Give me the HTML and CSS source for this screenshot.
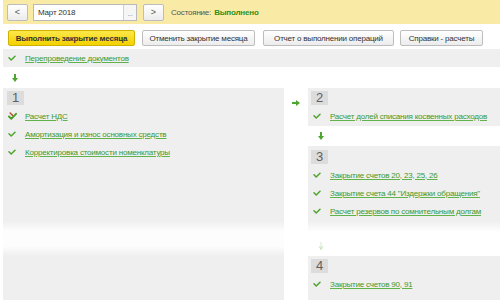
FILE: index.html
```html
<!DOCTYPE html>
<html lang="ru">
<head>
<meta charset="utf-8">
<title>Закрытие месяца</title>
<link rel="stylesheet" href="styles.css">
</head>
<body>
<div class="page">
  <div class="topbar">
    <button class="btn nav">&lt;</button>
    <div class="date"><span class="date-text">Март 2018</span><span class="date-pick">...</span></div>
    <button class="btn nav">&gt;</button>
    <span class="state-label">Состояние:</span>
    <span class="state">Выполнено</span>
  </div>

  <div class="actions">
    <button class="btn primary w-run">Выполнить закрытие месяца</button>
    <button class="btn w-cancel">Отменить закрытие месяца</button>
    <button class="btn w-report">Отчет о выполнении операций</button>
    <button class="btn w-ref">Справки - расчеты</button>
  </div>

  <div class="band">
    <div class="item"><svg class="chk" viewBox="0 0 8 6"><path d="M1 2.8 L3.2 5 L7 1.2"/></svg><a class="link">Перепроведение документов</a></div>
  </div>

  <div class="arrow-row">
    <svg class="arr-down" viewBox="0 0 6 8"><path d="M2 0 H4 V4 H6 L3 8 L0 4 H2 Z"/></svg>
  </div>

  <div class="stages">
    <div class="panel left">
      <div class="num">1</div>
      <div class="item"><svg class="chk warn" viewBox="0 0 9 8"><path class="g" d="M1 4.5 L3.3 6.8 L8 1.8"/><path class="r" d="M2.2 1 L4.6 3.4"/></svg><a class="link">Расчет НДС</a></div>
      <div class="item"><svg class="chk" viewBox="0 0 8 6"><path d="M1 2.8 L3.2 5 L7 1.2"/></svg><a class="link">Амортизация и износ основных средств</a></div>
      <div class="item"><svg class="chk" viewBox="0 0 8 6"><path d="M1 2.8 L3.2 5 L7 1.2"/></svg><a class="link">Корректировка стоимости номенклатуры</a></div>
    </div>

    <div class="connector">
      <svg class="arr-right" viewBox="0 0 8 6"><path d="M0 2 H4 V0 L8 3 L4 6 V4 H0 Z"/></svg>
    </div>

    <div class="right-col">
      <div class="panel p2">
        <div class="num">2</div>
        <div class="item"><svg class="chk" viewBox="0 0 8 6"><path d="M1 2.8 L3.2 5 L7 1.2"/></svg><a class="link">Расчет долей списания косвенных расходов</a></div>
      </div>
      <div class="step-arrow">
        <svg class="arr-down" viewBox="0 0 6 8"><path d="M2 0 H4 V4 H6 L3 8 L0 4 H2 Z"/></svg>
      </div>
      <div class="panel p3">
        <div class="num">3</div>
        <div class="item"><svg class="chk" viewBox="0 0 8 6"><path d="M1 2.8 L3.2 5 L7 1.2"/></svg><a class="link">Закрытие счетов 20, 23, 25, 26</a></div>
        <div class="item"><svg class="chk" viewBox="0 0 8 6"><path d="M1 2.8 L3.2 5 L7 1.2"/></svg><a class="link">Закрытие счета 44 "Издержки обращения"</a></div>
        <div class="item"><svg class="chk" viewBox="0 0 8 6"><path d="M1 2.8 L3.2 5 L7 1.2"/></svg><a class="link">Расчет резервов по сомнительным долгам</a></div>
      </div>
      <div class="step-arrow gap">
        <svg class="arr-down" viewBox="0 0 6 8"><path d="M2 0 H4 V4 H6 L3 8 L0 4 H2 Z"/></svg>
      </div>
      <div class="panel p4">
        <div class="num">4</div>
        <div class="item"><svg class="chk" viewBox="0 0 8 6"><path d="M1 2.8 L3.2 5 L7 1.2"/></svg><a class="link">Закрытие счетов 90, 91</a></div>
      </div>
    </div>
  </div>

  <div class="fade"></div>
</div>
</body>
</html>
```

FILE: styles.css
```css
* { box-sizing: border-box; }

html, body {
  margin: 0;
  padding: 0;
  background: #ffffff;
  overflow: hidden;
}

body {
  font-family: "Liberation Sans", Arial, sans-serif;
  font-size: 8px;
  letter-spacing: -0.2px;
  color: #333333;
}

.page {
  position: relative;
  width: 500px;
  height: 300px;
  padding-left: 3px;
  overflow: hidden;
}

/* ---------- top bar ---------- */
.topbar {
  height: 24px;
  background: #f9eba6;
  display: flex;
  align-items: center;
  padding-left: 4px;
}

.btn {
  font-family: inherit;
  font-size: 8px;
  letter-spacing: -0.2px;
  color: #333333;
  height: 16px;
  padding: 0;
  border: 1px solid #bdbdbd;
  border-radius: 2px;
  background: linear-gradient(#ffffff, #ececec);
  display: flex;
  align-items: center;
  justify-content: center;
  margin: 0;
  white-space: nowrap;
  flex: none;
}

.nav {
  width: 21px;
  height: 17px;
  font-size: 9px;
  letter-spacing: 0;
  color: #555555;
}

.date {
  margin-left: 5px;
  width: 104px;
  height: 17px;
  border: 1px solid #b9b9b9;
  background: #ffffff;
  display: flex;
  align-items: stretch;
  margin-right: 6px;
}

.date-text {
  flex: 1;
  display: flex;
  align-items: center;
  padding-left: 4px;
  color: #333333;
}

.date-pick {
  width: 13px;
  border-left: 1px solid #d0d0d0;
  background: #f6f6f6;
  color: #888888;
  display: flex;
  align-items: flex-end;
  justify-content: center;
  padding-bottom: 3px;
  font-size: 7px;
  line-height: 1;
}

.state-label {
  margin-left: 7px;
  color: #555555;
}

.state {
  margin-left: 3px;
  color: #2e8f1a;
  font-weight: bold;
}

/* ---------- actions ---------- */
.actions {
  display: flex;
  align-items: center;
  margin-top: 6px;
  padding-left: 5px;
  height: 16px;
}

.primary {
  background: linear-gradient(#fde84a, #f3d100);
  border-color: #cfb300;
  font-weight: bold;
  color: #333333;
}

.w-run { width: 127px; }
.w-cancel { width: 113px; margin-left: 7px; }
.w-report { width: 131px; margin-left: 8px; }
.w-ref { width: 83px; margin-left: 6px; }

/* ---------- items ---------- */
.item {
  display: flex;
  align-items: center;
  height: 18px;
}

.chk {
  width: 8px;
  height: 6px;
  margin-left: 5px;
  margin-right: 9px;
  flex: none;
}

.chk path {
  fill: none;
  stroke: #4ea52f;
  stroke-width: 1.5;
  stroke-linecap: round;
  stroke-linejoin: round;
}

.chk.warn {
  width: 9px;
  height: 8px;
  margin-right: 8px;
}

.chk.warn .g { stroke: #45a02a; stroke-width: 1.9; }
.chk.warn .r { stroke: #b34a2c; stroke-width: 1.4; }

.link {
  color: #3c9a2c;
  text-decoration: underline;
  text-decoration-color: #5fb34a;
  text-underline-offset: 1px;
  white-space: nowrap;
}

/* ---------- band ---------- */
.band {
  margin-top: 3px;
  height: 18px;
  background: #efefef;
  display: flex;
  align-items: center;
}

.arrow-row {
  height: 21px;
  display: flex;
  align-items: center;
  padding-left: 9px;
}

.arr-down {
  width: 6px;
  height: 8px;
  fill: #4ea52f;
}

.arr-right {
  width: 8px;
  height: 6px;
  fill: #4ea52f;
}

/* ---------- stages ---------- */
.stages {
  display: flex;
  align-items: stretch;
  height: 212px;
}

.panel {
  background: #efefef;
}

.num {
  width: 17px;
  height: 14px;
  background: #dcdcdc;
  color: #5f5f5f;
  font-size: 13px;
  letter-spacing: 0;
  line-height: 14px;
  text-align: center;
  margin-left: 3px;
}

.left {
  flex: none;
  width: 281px;
  padding-top: 3px;
}

.left .num { margin-left: 4px; margin-bottom: 2px; }

.connector {
  flex: none;
  width: 24px;
  padding-top: 12px;
  display: flex;
  justify-content: center;
  align-items: flex-start;
}

.right-col {
  flex: 1;
  min-width: 0;
  display: flex;
  flex-direction: column;
}

.p2 {
  height: 38px;
  padding-top: 3px;
}

.p2 .num, .p3 .num, .p4 .num { margin-bottom: 2px; }

.step-arrow {
  height: 20px;
  display: flex;
  align-items: center;
  padding-left: 10px;
}

.step-arrow.gap {
  height: 25px;
  align-items: flex-end;
  padding-bottom: 6px;
}

.p3 {
  height: 85px;
  padding-top: 4px;
}

.p4 {
  flex: 1;
  padding-top: 3px;
}

/* ---------- torn-off fade ---------- */
.fade {
  position: absolute;
  left: 0;
  right: 0;
  top: 221px;
  height: 35px;
  background: linear-gradient(rgba(255,255,255,0) 0%, rgba(255,255,255,0.88) 28%, rgba(255,255,255,0.88) 72%, rgba(255,255,255,0) 100%);
  pointer-events: none;
}
```
